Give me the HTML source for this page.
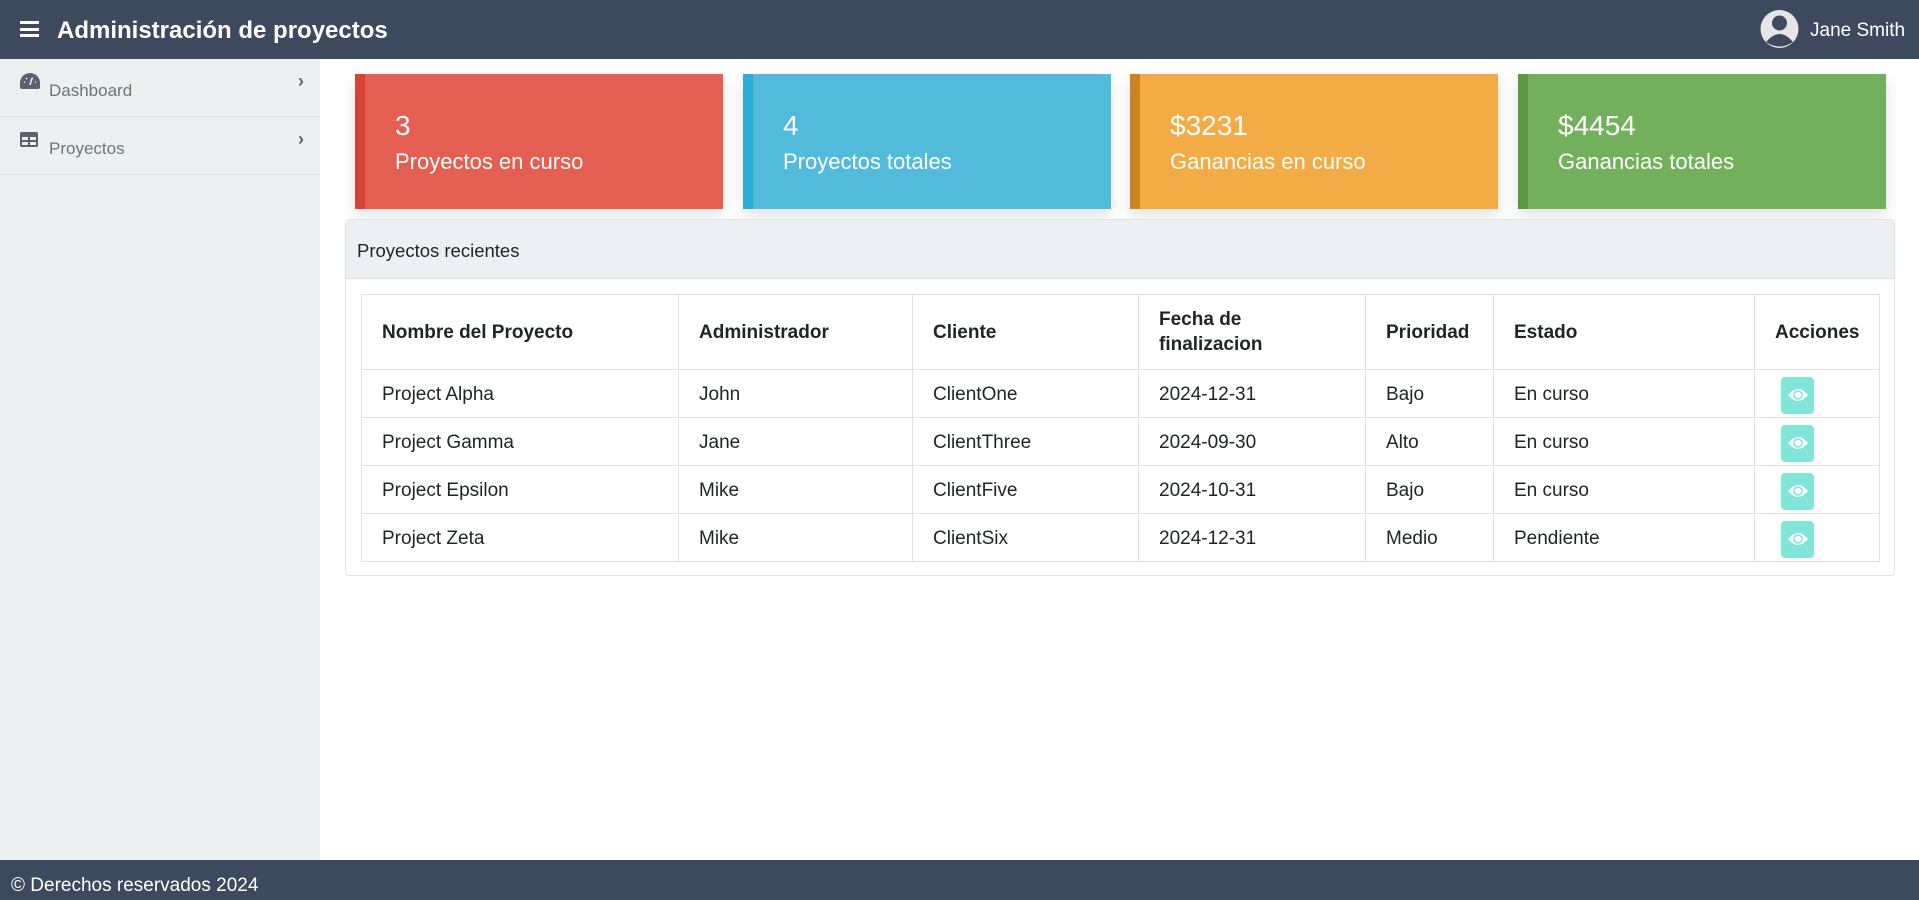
<!DOCTYPE html>
<html><head><meta charset="utf-8"><style>
*{box-sizing:border-box;margin:0;padding:0}
body{width:1919px;height:900px;overflow:hidden;font-family:"Liberation Sans",sans-serif;background:#fff;position:relative;color:#212529}
.top{position:absolute;left:0;top:0;width:1919px;height:59px;background:#3d4a5d;color:#fff}
.top .ham{position:absolute;left:20px;top:21px;width:19px;height:16px}
.top .ham i{display:block;height:3px;background:#fff;margin-bottom:3.5px}
.top h1{position:absolute;left:57px;top:17px;font-size:24px;font-weight:bold}
.top .user{position:absolute;left:1810px;top:20px;font-size:19px}
.side{position:absolute;left:0;top:59px;width:320px;height:801px;background:#ecf0f1}
.item{height:58px;border-bottom:1px solid #dde1e3;position:relative;color:#6c757d;font-size:17px}
.item span{position:absolute;left:49px;top:22px}
.item .chev{position:absolute;left:298px;top:12px;font-size:18px;color:#5a6270;font-weight:bold}
.card{position:absolute;top:74px;width:368px;height:135px;color:#fff;box-shadow:0 6px 14px rgba(0,0,0,.12)}
.card .n{position:absolute;left:30px;top:36px;font-size:28px}
.card .l{position:absolute;left:30px;top:75px;font-size:22px}
.panel{position:absolute;left:345px;top:219px;width:1550px;height:357px;border:1px solid #dfe3e8;border-radius:4px}
.panel .ph{height:59px;background:#ecf0f4;border-bottom:1px solid #dfe3e8;font-size:18.5px;padding:20px 0 0 11px}
table{position:absolute;left:15px;top:74px;width:1519px;border-collapse:collapse;font-size:19px}
td,th{border:1px solid #dee2e6;text-align:left;padding:0 0 0 20px;height:48px}
td{padding-top:3px}
th{height:75px;font-weight:bold;line-height:25px}
.eye{width:33px;height:37px;background:#81e6d9;border-radius:4px;margin-left:6px;display:flex;align-items:center;justify-content:center}
.foot{position:absolute;left:0;top:860px;width:1919px;height:40px;background:#3d4a5d;color:#fff;font-size:19px;padding:15px 0 0 11px}
</style></head><body>
<div class="top"><div class="ham"><i></i><i></i><i></i></div><h1>Administración de proyectos</h1>
<svg style="position:absolute;left:1760px;top:9px" width="39" height="40" viewBox="0 0 39 40"><circle cx="19.5" cy="20" r="19" fill="#e6e6e6"/><circle cx="19.5" cy="14" r="7.5" fill="#3d4a5d"/><path d="M6 33 Q19.5 17 33 33 Q19.5 42 6 33z" fill="#3d4a5d"/></svg>
<div class="user">Jane Smith</div></div>
<div class="side">
<div class="item"><svg style="position:absolute;left:20px;top:14px" width="20" height="16" viewBox="0 0 20 16"><path d="M10 0A10 10 0 0 0 0 10v4a2 2 0 0 0 2 2h16a2 2 0 0 0 2-2v-4A10 10 0 0 0 10 0z" fill="#5a6270"/><path d="M10 12l2-7M4 9h1M15 9h1M6 5l1 1M13 5l-1 1" stroke="#ecf0f1" stroke-width="1.5"/></svg><span>Dashboard</span><b class="chev">›</b></div>
<div class="item"><svg style="position:absolute;left:20px;top:15px" width="18" height="15" viewBox="0 0 18 15"><rect width="18" height="15" rx="2" fill="#5a6270"/><rect x="2" y="5" width="6" height="3" fill="#ecf0f1"/><rect x="10" y="5" width="6" height="3" fill="#ecf0f1"/><rect x="2" y="10" width="6" height="3" fill="#ecf0f1"/><rect x="10" y="10" width="6" height="3" fill="#ecf0f1"/></svg><span>Proyectos</span><b class="chev">›</b></div>
</div>
<div class="card" style="left:355px;background:#e45f51;border-left:10px solid #d44333"><div class="n">3</div><div class="l">Proyectos en curso</div></div>
<div class="card" style="left:743px;background:#52bbdc;border-left:10px solid #2eadd4"><div class="n">4</div><div class="l">Proyectos totales</div></div>
<div class="card" style="left:1130px;background:#f3ac45;border-left:10px solid #cc821e"><div class="n">$3231</div><div class="l">Ganancias en curso</div></div>
<div class="card" style="left:1518px;background:#73b05b;border-left:10px solid #5b9745"><div class="n">$4454</div><div class="l">Ganancias totales</div></div>
<div class="panel"><div class="ph">Proyectos recientes</div>
<table>
<tr><th style="width:317px">Nombre del Proyecto</th><th style="width:234px">Administrador</th><th style="width:226px">Cliente</th><th style="width:227px">Fecha de<br>finalizacion</th><th style="width:128px">Prioridad</th><th style="width:261px">Estado</th><th>Acciones</th></tr>
<tr><td>Project Alpha</td><td>John</td><td>ClientOne</td><td>2024-12-31</td><td>Bajo</td><td>En curso</td><td><div class="eye"><svg width="22" height="14" viewBox="0 0 22 14"><path d="M1 7Q11 -5 21 7Q11 19 1 7z" fill="#fff"/><circle cx="11" cy="7" r="4" fill="none" stroke="#81e6d9" stroke-width="1.5"/></svg></div></td></tr>
<tr><td>Project Gamma</td><td>Jane</td><td>ClientThree</td><td>2024-09-30</td><td>Alto</td><td>En curso</td><td><div class="eye"><svg width="22" height="14" viewBox="0 0 22 14"><path d="M1 7Q11 -5 21 7Q11 19 1 7z" fill="#fff"/><circle cx="11" cy="7" r="4" fill="none" stroke="#81e6d9" stroke-width="1.5"/></svg></div></td></tr>
<tr><td>Project Epsilon</td><td>Mike</td><td>ClientFive</td><td>2024-10-31</td><td>Bajo</td><td>En curso</td><td><div class="eye"><svg width="22" height="14" viewBox="0 0 22 14"><path d="M1 7Q11 -5 21 7Q11 19 1 7z" fill="#fff"/><circle cx="11" cy="7" r="4" fill="none" stroke="#81e6d9" stroke-width="1.5"/></svg></div></td></tr>
<tr><td>Project Zeta</td><td>Mike</td><td>ClientSix</td><td>2024-12-31</td><td>Medio</td><td>Pendiente</td><td><div class="eye"><svg width="22" height="14" viewBox="0 0 22 14"><path d="M1 7Q11 -5 21 7Q11 19 1 7z" fill="#fff"/><circle cx="11" cy="7" r="4" fill="none" stroke="#81e6d9" stroke-width="1.5"/></svg></div></td></tr>
</table></div>
<div class="foot">© Derechos reservados 2024</div>
</body></html>
